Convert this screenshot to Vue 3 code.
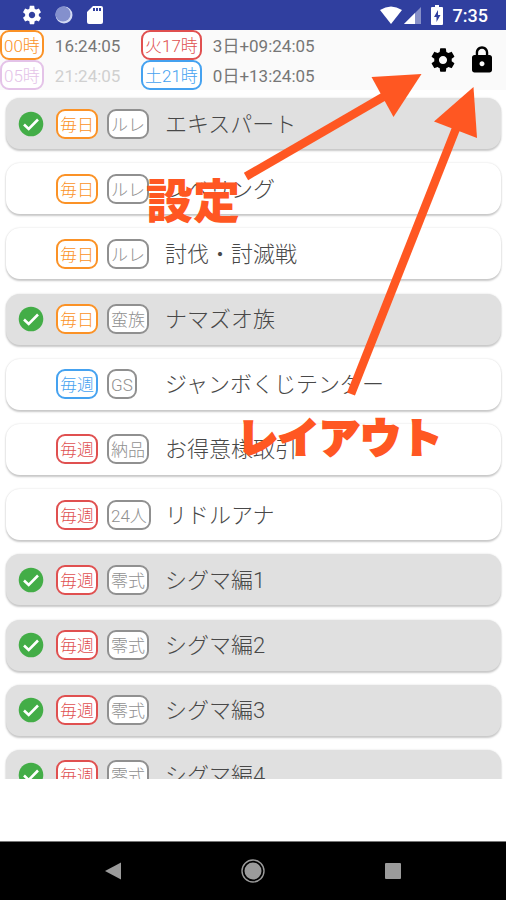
<script setup>
import { ref } from 'vue'

const timers = [
  { label: '00時', time: '16:24:05', tone: 'orange' },
  { label: '火17時', time: '3日+09:24:05', tone: 'red' },
  { label: '05時', time: '21:24:05', tone: 'purple', faded: true },
  { label: '土21時', time: '0日+13:24:05', tone: 'blue' },
]

const tasks = ref([
  { cycle: '毎日', tone: 'orange', kind: 'ルレ', title: 'エキスパート', done: true },
  { cycle: '毎日', tone: 'orange', kind: 'ルレ', title: 'レベリング', done: false },
  { cycle: '毎日', tone: 'orange', kind: 'ルレ', title: '討伐・討滅戦', done: false },
  { cycle: '毎日', tone: 'orange', kind: '蛮族', title: 'ナマズオ族', done: true },
  { cycle: '毎週', tone: 'blue', kind: 'GS', title: 'ジャンボくじテンダー', done: false },
  { cycle: '毎週', tone: 'red', kind: '納品', title: 'お得意様取引', done: false },
  { cycle: '毎週', tone: 'red', kind: '24人', title: 'リドルアナ', done: false },
  { cycle: '毎週', tone: 'red', kind: '零式', title: 'シグマ編1', done: true },
  { cycle: '毎週', tone: 'red', kind: '零式', title: 'シグマ編2', done: true },
  { cycle: '毎週', tone: 'red', kind: '零式', title: 'シグマ編3', done: true },
  { cycle: '毎週', tone: 'red', kind: '零式', title: 'シグマ編4', done: true },
])

const gear =
  'M19.43 12.98c.04-.32.07-.64.07-.98s-.03-.66-.07-.98l2.11-1.65c.19-.15.24-.42.12-.64l-2-3.46c-.12-.22-.39-.3-.61-.22l-2.49 1c-.52-.4-1.08-.73-1.69-.98l-.38-2.65C14.46 2.18 14.25 2 14 2h-4c-.25 0-.46.18-.49.42l-.38 2.65c-.61.25-1.17.59-1.69.98l-2.49-1c-.23-.09-.49 0-.61.22l-2 3.46c-.13.22-.07.49.12.64l2.11 1.65c-.04.32-.07.65-.07.98s.03.66.07.98l-2.11 1.65c-.19.15-.24.42-.12.64l2 3.46c.12.22.39.3.61.22l2.49-1c.52.4 1.08.73 1.69.98l.38 2.65c.03.24.24.42.49.42h4c.25 0 .46-.18.49-.42l.38-2.65c.61-.25 1.17-.59 1.69-.98l2.49 1c.23.09.49 0 .61-.22l2-3.46c.12-.22.07-.49-.12-.64l-2.11-1.65zM12 15.5c-1.93 0-3.5-1.57-3.5-3.5s1.57-3.5 3.5-3.5 3.5 1.57 3.5 3.5-1.57 3.5-3.5 3.5z'
</script>

<template>
  <div class="screen">
    <header class="status">
      <div class="status-group">
        <svg width="22" height="22" viewBox="0 0 24 24"><path :d="gear" fill="#fff" /></svg>
        <svg class="orb" width="18" height="18" viewBox="0 0 18 18">
          <circle cx="9" cy="9" r="8.5" fill="#d3daf4" />
          <circle cx="8" cy="8" r="7.5" fill="#8490cd" />
        </svg>
        <svg width="16" height="20" viewBox="0 0 16 20">
          <path d="M6 1h8a2 2 0 0 1 2 2v14a2 2 0 0 1-2 2H2a2 2 0 0 1-2-2V7z" fill="#fff" />
          <path d="M6 3h2v3H6zM9 3h2v3H9zM12 3h2v3h-2z" fill="#303f9f" />
        </svg>
      </div>
      <div class="status-group right">
        <svg width="22" height="18" viewBox="0 0 22 18"><path d="M0 4Q11-3 22 4L11 18z" fill="#fff" /></svg>
        <svg class="signal" width="17" height="17" viewBox="0 0 17 17">
          <path d="M17 0v17H0z" fill="#8790c8" /><path d="M11 6v11H0z" fill="#fff" />
        </svg>
        <svg width="12" height="20" viewBox="0 0 12 20">
          <path d="M4 0h4v2h3a1 1 0 0 1 1 1v16a1 1 0 0 1-1 1H1a1 1 0 0 1-1-1V3a1 1 0 0 1 1-1h3z" fill="#fff" />
          <path d="M7 5 3 12h2.500v5L9.500 10H7z" fill="#303f9f" />
        </svg>
        <time class="clock">7:35</time>
      </div>
    </header>

    <section class="toolbar">
      <div class="timers">
        <div v-for="t in timers" :key="t.label" class="timer" :class="{ faded: t.faded }">
          <span class="badge" :class="t.tone">{{ t.label }}</span>
          <span class="time">{{ t.time }}</span>
        </div>
      </div>
      <div class="actions">
        <button type="button" aria-label="設定">
          <svg width="28" height="28" viewBox="0 0 24 24"><path :d="gear" /></svg>
        </button>
        <button type="button" aria-label="レイアウト">
          <svg width="30" height="30" viewBox="0 0 24 24">
            <path d="M18 8h-1V6c0-2.760-2.240-5-5-5S7 3.240 7 6v2H6c-1.100 0-2 .9-2 2v10c0 1.100.9 2 2 2h12c1.100 0 2-.9 2-2V10c0-1.100-.9-2-2-2zm-6 9c-1.100 0-2-.9-2-2s.9-2 2-2 2 .9 2 2-.9 2-2 2zm3.100-9H8.900V6c0-1.710 1.390-3.100 3.100-3.100s3.100 1.390 3.100 3.100v2z" />
          </svg>
        </button>
      </div>
    </section>

    <main class="viewport">
      <div class="tasks">
        <label v-for="task in tasks" :key="task.title" class="card" :class="{ done: task.done }">
          <input v-model="task.done" class="check" type="checkbox" />
          <svg class="tick" width="26" height="26" viewBox="0 0 26 26">
            <template v-if="task.done">
              <circle cx="13" cy="13" r="12.300" fill="#43ad47" />
              <path d="M6 13.500l4.700 4.500L20 8.500" fill="none" stroke="#fff" stroke-width="2.600" />
            </template>
          </svg>
          <span class="badge" :class="task.tone">{{ task.cycle }}</span>
          <span class="kind"><span class="badge gray">{{ task.kind }}</span></span>
          <span class="title">{{ task.title }}</span>
        </label>
      </div>
    </main>

    <nav class="nav">
      <button type="button" aria-label="戻る">
        <svg width="24" height="24" viewBox="0 0 24 24"><path d="M20 3.500v17L4 12z" fill="#9b9b9b" /></svg>
      </button>
      <button type="button" aria-label="ホーム">
        <svg width="24" height="24" viewBox="0 0 24 24">
          <circle cx="12" cy="12" r="11" fill="none" stroke="#9b9b9b" stroke-width="1.400" />
          <circle cx="12" cy="12" r="8.500" fill="#9b9b9b" />
        </svg>
      </button>
      <button type="button" aria-label="履歴">
        <svg width="24" height="24" viewBox="0 0 24 24"><rect x="4" y="4" width="16" height="16" rx="1" fill="#9b9b9b" /></svg>
      </button>
    </nav>

    <!-- Help overlay pointing at the two toolbar buttons -->
    <svg class="arrows" width="506" height="420" viewBox="0 0 506 420">
      <g fill="#ff5722" stroke="#ff5722">
        <path d="M246 176.500L390 93" stroke-width="8.500" />
        <path d="M421.500 74L371.500 77L393.500 117z" stroke="none" />
        <path d="M351 394L457 126" stroke-width="8.500" />
        <path d="M473.500 87L434 121.500L477 138z" stroke="none" />
      </g>
    </svg>
    <span class="note note-settings">設定</span>
    <span class="note note-layout">レイアウト</span>
  </div>
</template>

<style>
body {
  margin: 0;
}
</style>

<style scoped>
.screen {
  position: relative;
  display: flex;
  flex-direction: column;
  height: 100vh;
  overflow: hidden;
  background: #fff;
  color: #6b6b6b;
  font-family: Roboto, 'Noto Sans CJK JP', sans-serif;
  font-size: 17px;
  font-weight: 300;
}
button {
  display: flex;
  padding: 0;
  border: 0;
  background: none;
}
svg {
  display: block;
  flex: none;
}
.status {
  display: flex;
  justify-content: space-between;
  box-sizing: border-box;
  height: 30px;
  padding: 0 18px 0 21px;
  background: #303f9f;
}
.status-group {
  display: flex;
  align-items: center;
  gap: 12px;
}
.orb {
  margin-right: 2px;
}
.right {
  gap: 10px;
}
.signal {
  margin-left: -8px;
}
.clock {
  color: #fff;
  font-size: 18px;
  font-weight: 500;
}
.toolbar {
  display: flex;
  align-items: center;
  justify-content: space-between;
  height: 60px;
  padding-right: 9px;
  background: #fafafa;
}
.timers {
  display: grid;
  grid-template-columns: 141px auto;
}
.timer {
  display: flex;
  align-items: center;
  gap: 11px;
  height: 30px;
  color: #767676;
}
.time {
  padding-top: 2px;
  font-weight: 400;
  line-height: 28px;
}
.faded {
  color: #d0d0d0;
}
.actions {
  display: flex;
  align-items: center;
  gap: 10px;
}
.badge {
  display: block;
  box-sizing: border-box;
  height: 30px;
  padding: 0 2px;
  border: 2px solid;
  border-radius: 9px;
  background: #fff;
  line-height: 28px;
  white-space: nowrap;
}
.orange {
  color: #fb9226;
}
.red {
  color: #e05050;
}
.blue {
  color: #45a2f0;
}
.purple {
  color: #e4c3e8;
}
.gray {
  color: #909090;
}
.viewport {
  flex: 1;
  min-height: 0;
  overflow: hidden;
  margin-bottom: 62px;
}
.tasks {
  display: grid;
  align-content: space-between;
  height: 703px;
  padding: 8px 5px 8px 6px;
}
.card {
  display: flex;
  align-items: center;
  box-sizing: border-box;
  height: 51px;
  padding: 0 12px;
  border-radius: 14px;
  background: #fff;
  box-shadow: 0 2px 2px #c8c8c8, 0 0 2px #d8d8d8;
}
.done {
  background: #e0e0e0;
}
.check {
  width: 0;
  height: 0;
  margin: 0;
  appearance: none;
}
.tick {
  margin-right: 12px;
}
.kind {
  display: flex;
  width: 48px;
  margin: 0 10px 0 9px;
}
.title {
  padding-top: 2px;
  color: #484848;
  font-size: 22px;
  line-height: 48px;
  white-space: nowrap;
}
.nav {
  display: flex;
  align-items: center;
  justify-content: space-around;
  box-sizing: border-box;
  height: 59px;
  padding: 0 43px;
  border-top: 1px solid #777;
  background: #000;
}
.arrows {
  position: absolute;
  top: 0;
  left: 0;
  pointer-events: none;
}
.note {
  position: absolute;
  color: #ff5722;
  font-weight: 900;
  line-height: 48px;
  white-space: nowrap;
  pointer-events: none;
}
.note-settings {
  top: 178px;
  left: 146px;
  font-size: 47px;
}
.note-layout {
  top: 415px;
  left: 237px;
  font-size: 41px;
  -webkit-text-stroke: 2px #ff5722;
}
</style>
